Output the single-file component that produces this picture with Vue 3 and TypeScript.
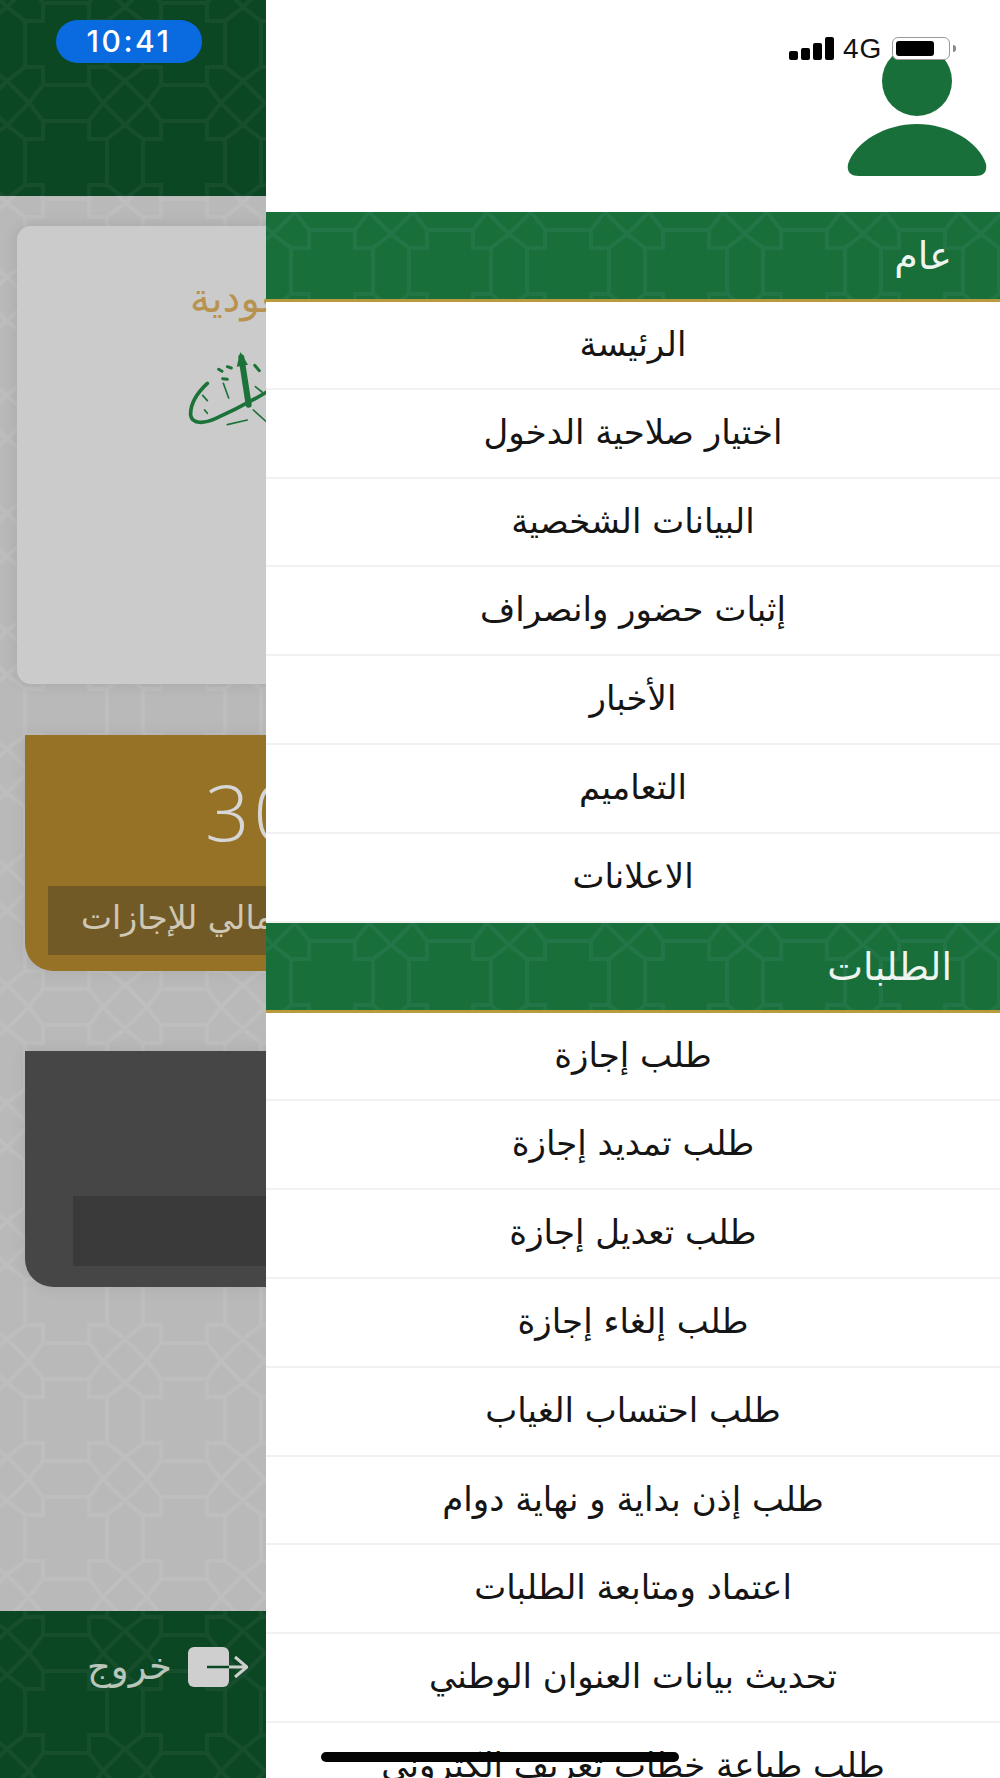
<script setup lang="ts">
interface MenuSection {
  title: string
  items: string[]
}

const sections: MenuSection[] = [
  {
    title: 'عام',
    items: [
      'الرئيسة',
      'اختيار صلاحية الدخول',
      'البيانات الشخصية',
      'إثبات حضور وانصراف',
      'الأخبار',
      'التعاميم',
      'الاعلانات',
    ],
  },
  {
    title: 'الطلبات',
    items: [
      'طلب إجازة',
      'طلب تمديد إجازة',
      'طلب تعديل إجازة',
      'طلب إلغاء إجازة',
      'طلب احتساب الغياب',
      'طلب إذن بداية و نهاية دوام',
      'اعتماد ومتابعة الطلبات',
      'تحديث بيانات العنوان الوطني',
      'طلب طباعة خطاب تعريف الكتروني',
    ],
  },
]
</script>

<template>
  <div class="app">
    <div class="page">
      <header class="top-bar pattern-dark">
        <span class="time-pill">10:41</span>
      </header>

      <main class="content pattern-grey">
        <section class="logo-card">
          <span class="logo-gold">السعودية</span>
          <svg class="logo-green" width="100" height="170" viewBox="0 0 300 510" fill="none" stroke="#1c7238" stroke-linecap="round">
            <path d="M112 340C84 366 60 400 62 436C66 462 100 462 136 446C190 422 240 396 290 366" stroke-width="11" />
            <path d="M214 262L236 404" stroke-width="18" />
            <path d="M200 290L211 246L234 284Z" fill="#1c7238" stroke="none" />
            <path d="M160 340L176 384M172 464L232 450M256 350L276 366M250 420L290 456M98 376L112 392M104 420L112 430" stroke-width="5" />
            <path d="M146 298L156 304M172 290L184 294M158 326L172 328M254 286L268 302" stroke-width="9" />
          </svg>
        </section>

        <section class="stat-card gold">
          <div class="stat-number">30</div>
          <div class="stat-band">الرصيد الإجمالي للإجازات</div>
        </section>

        <section class="stat-card dark">
          <div class="stat-band"></div>
        </section>
      </main>

      <footer class="bottom-bar pattern-dark">
        <div class="logout">
          <span class="logout-label">خروج</span>
          <svg width="60" height="40" viewBox="0 0 60 40" fill="none">
            <rect x="0" y="0" width="41" height="40" rx="6" fill="#cfcfcf" />
            <path d="M19 20H41" stroke="#0b4722" stroke-width="2.5" />
            <path d="M41 20H58M47 10L59 20L47 30" stroke="#cfcfcf" stroke-width="3" />
          </svg>
        </div>
      </footer>
    </div>

    <aside class="drawer">
      <div class="drawer-head">
        <svg width="140" height="130" viewBox="0 0 140 130">
          <circle cx="70" cy="35" r="35" fill="#186f3a" />
          <path d="M12 130Q-1 130 1 118C8 96 38 78 70 78C102 78 132 96 139 118Q141 130 128 130Z" fill="#186f3a" />
        </svg>
      </div>

      <template v-for="section in sections" :key="section.title">
        <div class="section-title pattern-green">{{ section.title }}</div>
        <div v-for="item in section.items" :key="item" class="menu-row">{{ item }}</div>
      </template>
    </aside>

    <div class="status-icons">
      <span class="signal">
        <i style="height: 9px"></i>
        <i style="height: 12px"></i>
        <i style="height: 17px"></i>
        <i style="height: 23px"></i>
      </span>
      <span class="network">4G</span>
      <span class="battery"><b></b></span>
      <span class="battery-nub"></span>
    </div>

    <div class="home-indicator"></div>
  </div>
</template>

<style scoped>
.app {
  position: relative;
  width: 1000px;
  height: 1778px;
  overflow: hidden;
  font-family: 'DejaVu Sans', 'Noto Sans', sans-serif;
}

.page {
  height: 100%;
  display: flex;
  flex-direction: column;
}

.pattern-dark,
.pattern-grey,
.pattern-green {
  background-size: 118px 118px;
  background-position: 7px 103px;
}

.pattern-dark {
  background-color: #0b4722;
  background-image: url("data:image/svg+xml,%3Csvg xmlns='http://www.w3.org/2000/svg' width='118' height='118' fill='none' stroke='%23174e2d' stroke-width='4'%3E%3Cpath d='M22 0L36-18H82L96 0L82 18H36ZM22 118L36 100H82L96 118L82 136H36ZM0 22L18 36V82L0 96L-18 82V36ZM118 22L136 36V82L118 96L100 82V36ZM22 0L0 22M96 0L118 22M22 118L0 96M96 118L118 96M36 18V36H18M82 18V36H100M36 100V82H18M82 100V82H100'/%3E%3C/svg%3E");
}

.pattern-green {
  background-color: #186f3a;
  background-position: 7px 0;
  background-image: url("data:image/svg+xml,%3Csvg xmlns='http://www.w3.org/2000/svg' width='118' height='118' fill='none' stroke='%23217546' stroke-width='4'%3E%3Cpath d='M22 0L36-18H82L96 0L82 18H36ZM22 118L36 100H82L96 118L82 136H36ZM0 22L18 36V82L0 96L-18 82V36ZM118 22L136 36V82L118 96L100 82V36ZM22 0L0 22M96 0L118 22M22 118L0 96M96 118L118 96M36 18V36H18M82 18V36H100M36 100V82H18M82 100V82H100'/%3E%3C/svg%3E");
}

.pattern-grey {
  background-color: #b9b9b9;
  background-image: url("data:image/svg+xml,%3Csvg xmlns='http://www.w3.org/2000/svg' width='118' height='118' fill='none' stroke='%23bebebe' stroke-width='4'%3E%3Cpath d='M22 0L36-18H82L96 0L82 18H36ZM22 118L36 100H82L96 118L82 136H36ZM0 22L18 36V82L0 96L-18 82V36ZM118 22L136 36V82L118 96L100 82V36ZM22 0L0 22M96 0L118 22M22 118L0 96M96 118L118 96M36 18V36H18M82 18V36H100M36 100V82H18M82 100V82H100'/%3E%3C/svg%3E");
}

.top-bar {
  height: 196px;
  flex: none;
  padding: 20px 0 0 56px;
  box-sizing: border-box;
}

.time-pill {
  display: block;
  width: 146px;
  height: 43px;
  border-radius: 22px;
  background: #0a6be0;
  color: #fff;
  font: 500 30px/43px Inter, 'Open Sans', sans-serif;
  letter-spacing: 2.5px;
  text-align: center;
}

.content {
  flex: 1;
  display: flex;
  flex-direction: column;
  padding: 30px 0 0 17px;
}

.logo-card {
  position: relative;
  width: 966px;
  height: 458px;
  flex: none;
  border-radius: 14px;
  background: #cbcbcb;
  box-shadow: 0 0 16px rgba(0, 0, 0, 0.1);
}

.logo-gold {
  position: absolute;
  top: 40px;
  left: 173px;
  color: #b8924f;
  font-size: 40px;
  line-height: 64px;
  white-space: nowrap;
  direction: rtl;
}

.logo-green {
  position: absolute;
  top: 44px;
  left: 153px;
}

.stat-card {
  width: 950px;
  height: 236px;
  flex: none;
  margin-left: 8px;
  border-radius: 0 0 0 28px;
  box-sizing: border-box;
  box-shadow: 0 0 16px rgba(0, 0, 0, 0.08);
}

.gold {
  margin-top: 51px;
  padding: 29px 0 0 23px;
  background: #967227;
}

.stat-number {
  height: 122px;
  padding: 2px 0 0 157px;
  box-sizing: border-box;
  color: #d6d6d6;
  font: 300 78px/90px 'Open Sans', sans-serif;
  letter-spacing: 4px;
}

.gold .stat-band {
  height: 69px;
  padding-left: 33px;
  background: #725a26;
  color: #cfc8b6;
  font-size: 33px;
  line-height: 64px;
  direction: rtl;
  text-align: left;
  white-space: nowrap;
}

.dark {
  margin-top: 80px;
  padding: 145px 0 0 48px;
  background: #464646;
}

.dark .stat-band {
  height: 70px;
  background: #3a3a3a;
}

.bottom-bar {
  height: 167px;
  flex: none;
  background-position: 7px 42px;
}

.logout {
  width: 248px;
  display: flex;
  justify-content: flex-end;
  gap: 16px;
  padding-top: 36px;
}

.logout-label {
  color: #b9c6bb;
  font-size: 37px;
  line-height: 40px;
}

.drawer {
  position: absolute;
  top: 0;
  left: 266px;
  width: 734px;
  background: #fff;
  direction: rtl;
}

.drawer-head {
  height: 212px;
  display: flex;
  padding: 46px 13px 0 0;
  box-sizing: border-box;
}

.section-title {
  height: 90px;
  padding-right: 48px;
  box-sizing: border-box;
  border-bottom: 3px solid #b99b3e;
  color: #eef4ef;
  font-size: 38px;
  line-height: 88px;
}

.menu-row {
  height: 88.8px;
  box-sizing: border-box;
  border-bottom: 2px solid #f1f1f1;
  color: #151515;
  font-size: 34px;
  line-height: 84px;
  text-align: center;
  white-space: nowrap;
}

.drawer-head + .section-title + .menu-row {
  height: 87.8px;
}

.status-icons {
  position: absolute;
  top: 37px;
  left: 789px;
  display: flex;
  align-items: center;
  height: 23px;
}

.signal {
  display: flex;
  align-items: flex-end;
  gap: 3px;
  height: 23px;
}

.signal i {
  display: block;
  width: 9px;
  border-radius: 2px;
  background: #000;
}

.network {
  margin-left: 9px;
  color: #111;
  font: 28px/23px 'Liberation Sans', sans-serif;
  letter-spacing: 1px;
}

.battery {
  width: 58px;
  height: 23px;
  margin-left: 10px;
  padding: 3px;
  box-sizing: border-box;
  border: 1.5px solid #9a9a9a;
  border-radius: 6px;
  background: #fff;
}

.battery b {
  display: block;
  width: 38px;
  height: 100%;
  border-radius: 3px;
  background: #000;
}

.battery-nub {
  width: 3px;
  height: 7px;
  margin-left: 3px;
  border-radius: 0 3px 3px 0;
  background: #8a8a8a;
}

.home-indicator {
  position: absolute;
  top: 1752px;
  left: 321px;
  width: 358px;
  height: 10px;
  border-radius: 5px;
  background: #050505;
}
</style>
